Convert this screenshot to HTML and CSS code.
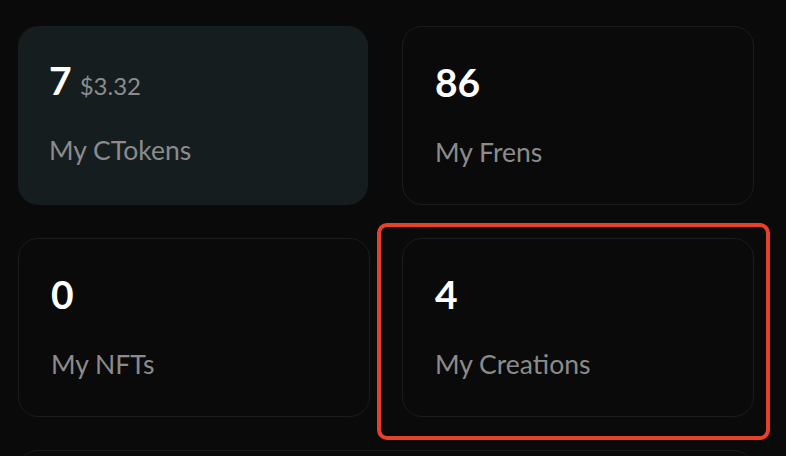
FILE: index.html
```html
<!DOCTYPE html>
<html>
<head>
<meta charset="utf-8">
<link rel="stylesheet" href="styles.css">
</head>
<body>
<div class="grid">
  <div class="card card-active">
    <div class="value">7 <span class="sub">$3.32</span></div>
    <div class="label">My CTokens</div>
  </div>
  <div class="card">
    <div class="value">86</div>
    <div class="label">My Frens</div>
  </div>
  <div class="card">
    <div class="value">0</div>
    <div class="label">My NFTs</div>
  </div>
  <div class="card card-highlight">
    <div class="value">4</div>
    <div class="label">My Creations</div>
  </div>
  <div class="card card-wide"></div>
</div>
</body>
</html>
```
FILE: styles.css
```css
html, body {
  margin: 0;
  padding: 0;
  background: #0a0a0a;
  width: 786px;
  height: 456px;
  overflow: hidden;
  font-family: "Lato", "Noto Sans", sans-serif;
}
.grid {
  display: grid;
  grid-template-columns: 352px 352px;
  grid-auto-rows: 179px;
  column-gap: 32px;
  row-gap: 33px;
  padding: 26px 0 0 18px;
}
.card {
  position: relative;
  box-sizing: border-box;
  border: 1px solid #1c1c20;
  border-radius: 20px;
  padding: 32px 32px 0 32px;
  display: flex;
  flex-direction: column;
}
.card-active {
  background: #161d1f;
  border-color: #161d1f;
  width: 350px;
  padding-left: 30px;
  padding-top: 30px;
}
.card-highlight::after {
  content: "";
  position: absolute;
  left: -26px;
  top: -16px;
  right: -17px;
  bottom: -24px;
  border: 4px solid #e8412a;
  border-radius: 10px;
}
.card-wide {
  grid-column: 1 / 3;
}
.value {
  color: #ffffff;
  font-weight: 700;
  font-size: 39px;
  line-height: 46px;
  height: 46px;
  display: flex;
  align-items: baseline;
  gap: 8px;
}
.sub {
  color: #8c8c8c;
  font-weight: 400;
  font-size: 24px;
}
.label {
  margin-top: 31px;
  color: #8b8b8b;
  font-size: 26.5px;
  line-height: 32px;
}
```
